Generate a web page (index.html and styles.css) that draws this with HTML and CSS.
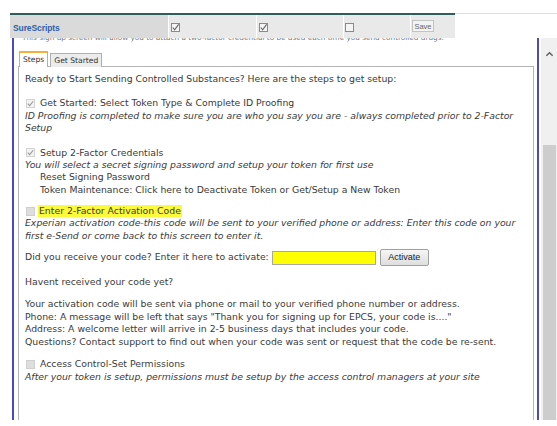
FILE: index.html
```html
<!DOCTYPE html>
<html>
<head>
<meta charset="utf-8">
<title>EPCS Setup</title>
<link rel="stylesheet" href="styles.css">
</head>
<body>
<div class="topbar">
  <div class="hdr">
    <div class="cell name">SureScripts</div>
    <div class="cell c2"><span class="hcb on"><svg viewBox="0 0 10 10"><polyline points="2,5 4,7.5 8.5,1.5"/></svg></span></div>
    <div class="cell c3"><span class="hcb on"><svg viewBox="0 0 10 10"><polyline points="2,5 4,7.5 8.5,1.5"/></svg></span></div>
    <div class="cell c4"><span class="hcb"></span></div>
    <div class="cell c5"><span class="save">Save</span></div>
  </div>
</div>
<div class="frame">
  <div class="panel">
    <div class="cut"><p>This sign up screen will allow you to attach a two-factor credential to be used each time you send controlled drugs.</p></div>
    <div class="tabs"><span class="tab active">Steps</span><span class="tab">Get Started</span></div>
    <div class="box">
      <p class="line first">Ready to Start Sending Controlled Substances? Here are the steps to get setup:</p>

      <div class="blk">
        <div class="line"><span class="cb on"><svg viewBox="0 0 10 10"><polyline points="2,5.2 4,7.3 8,2.5"/></svg></span>Get Started: Select Token Type &amp; Complete ID Proofing</div>
        <div class="line it">ID Proofing is completed to make sure you are who you say you are - always completed prior to 2-Factor<br>Setup</div>
      </div>

      <div class="blk">
        <div class="line"><span class="cb on"><svg viewBox="0 0 10 10"><polyline points="2,5.2 4,7.3 8,2.5"/></svg></span>Setup 2-Factor Credentials</div>
        <div class="line it">You will select a secret signing password and setup your token for first use</div>
        <div class="line ind">Reset Signing Password</div>
        <div class="line ind">Token Maintenance: Click here to Deactivate Token or Get/Setup a New Token</div>
      </div>

      <div class="blk b3">
        <div class="line"><span class="cb"></span><span class="hl">Enter 2-Factor Activation Code</span></div>
        <div class="line it">Experian activation code-this code will be sent to your verified phone or address: Enter this code on your<br>first e-Send or come back to this screen to enter it.</div>
      </div>

      <div class="row">Did you receive your code? Enter it here to activate: <span class="inp"></span><span class="btn">Activate</span></div>

      <div class="line havent">Havent received your code yet?</div>

      <div class="blk b5">
        <div class="line">Your activation code will be sent via phone or mail to your verified phone number or address.</div>
        <div class="line">Phone: A message will be left that says "Thank you for signing up for EPCS, your code is...."</div>
        <div class="line">Address: A welcome letter will arrive in 2-5 business days that includes your code.</div>
        <div class="line">Questions? Contact support to find out when your code was sent or request that the code be re-sent.</div>
      </div>

      <div class="blk b6">
        <div class="line"><span class="cb"></span>Access Control-Set Permissions</div>
        <div class="line it">After your token is setup, permissions must be setup by the access control managers at your site</div>
      </div>
    </div>
  </div>
  <div class="scroll">
    <div class="arrow"><svg viewBox="0 0 10 6"><polyline points="1.5,5 5,1.5 8.5,5"/></svg></div>
    <div class="thumb"></div>
  </div>
</div>
</body>
</html>
```

FILE: styles.css
```css
html, body {
  margin: 0;
  padding: 0;
  background: #ffffff;
  width: 557px;
  height: 426px;
  overflow: hidden;
}

body {
  font-family: "DejaVu Sans", Verdana, sans-serif;
  color: #3a3a3a;
}

/* ---------- top header row ---------- */
.topbar {
  margin-top: 13px;
  margin-left: 10px;
  border-top: 1px solid #dcdcdc;
}

.hdr {
  margin-top: -1px;
  width: 445px;
  display: flex;
  border-top: 2px solid #2f5d5b;
  height: 23px;
}

.cell {
  display: flex;
  align-items: center;
  background: #e9e9e9;
  box-sizing: border-box;
}

.cell.name {
  width: 158px;
  background: #dadada;
  padding-left: 3px;
  padding-top: 2px;
  font-family: "Liberation Sans", Arial, sans-serif;
  font-weight: bold;
  font-size: 8.5px;
  color: #2f5fa6;
  letter-spacing: -0.1px;
}

.cell.c2 { width: 88px; border-left: 1px solid #ffffff; padding-left: 2px; padding-top: 2px; }
.cell.c3 { width: 87px; border-left: 1px solid #ffffff; padding-left: 2px; padding-top: 2px; }
.cell.c4 { width: 67px; border-left: 1px solid #ffffff; padding-left: 1px; padding-top: 2px; }
.cell.c5 { width: 45px; border-left: 1px solid #ffffff; padding-left: 1px; padding-bottom: 1px; }

.hcb {
  display: inline-block;
  width: 9px;
  height: 9px;
  border: 1px solid #8a8a8a;
  background: #f4f4f4;
  box-sizing: border-box;
}

.hcb svg {
  display: block;
  width: 9px;
  height: 9px;
  margin: -1px;
}

.hcb svg polyline {
  fill: none;
  stroke: #6d6d6d;
  stroke-width: 1.3;
}

.save {
  display: inline-block;
  width: 22px;
  height: 12px;
  line-height: 11px;
  box-sizing: border-box;
  border: 1px solid #c3c3c3;
  background: #f3f3f3;
  font-family: "Liberation Sans", Arial, sans-serif;
  font-size: 7.5px;
  color: #666;
  text-align: center;
}

/* ---------- scrolling frame ---------- */
.frame {
  display: flex;
  margin-left: 12px;
  height: 382px;
}

.panel {
  width: 527px;
  box-sizing: border-box;
  border-left: 2px solid #4a4ac4;
  border-right: 2px solid #4a4ac4;
  padding: 0 3px 0 4px;
  overflow: hidden;
}

.cut {
  height: 5px;
  overflow: hidden;
  padding-left: 4px;
}

.cut p {
  margin: -5px 0 0 0;
  font-size: 7.3px;
  line-height: 10px;
  color: #777;
  white-space: nowrap;
}

.tabs {
  margin-top: 8px;
  margin-left: 1px;
  display: flex;
  align-items: flex-end;
  position: relative;
  z-index: 1;
  margin-bottom: -1px;
}

.tab {
  display: inline-block;
  height: 14px;
  box-sizing: border-box;
  border: 1px solid #b0b0b0;
  border-bottom: none;
  background: #ececec;
  padding: 0 3px;
  font-family: "DejaVu Sans", Verdana, sans-serif;
  font-size: 7.6px;
  line-height: 13px;
  color: #333;
  margin-right: 2px;
}

.tab.active {
  height: 16px;
  background: #ffffff;
  border-top: 2px solid #f0b23a;
  line-height: 14px;
}

.box {
  border: 1px solid #b4b4b4;
  padding: 6px 6px 0 6px;
  height: 400px;
  font-size: 9.3px;
  line-height: 12.4px;
  white-space: nowrap;
}

.line {
  margin: 0;
  display: flex;
  align-items: center;
}

.it {
  display: block;
  font-style: italic;
}

.ind { padding-left: 15px; }

.blk { margin-top: 12px; }
.blk.b3 { margin-top: 9px; }
.blk.b5 { margin-top: 10px; }
.blk.b6 { margin-top: 10px; }

.cb {
  display: inline-block;
  width: 9px;
  height: 9px;
  box-sizing: border-box;
  border: 1px solid #cfcfcf;
  background: #dedede;
  margin: 0 5px 0 1px;
  flex: none;
}

.cb.on {
  background: #f3f3f3;
  border-color: #d3d3d3;
}

.cb svg {
  display: block;
  width: 9px;
  height: 9px;
  margin: -1px;
}

.cb svg polyline {
  fill: none;
  stroke: #9a9a9a;
  stroke-width: 1.2;
}

.hl {
  background: #fbfb3c;
  padding: 0 1px;
  line-height: 12px;
  margin-left: -2px;
}

.row {
  margin-top: 7px;
  display: flex;
  align-items: center;
  height: 17px;
}

.inp {
  display: inline-block;
  width: 104px;
  height: 14px;
  box-sizing: border-box;
  border: 1px solid #a8a8a8;
  background: #ffff00;
  margin-left: 3px;
}

.btn {
  display: inline-block;
  width: 49px;
  height: 17px;
  box-sizing: border-box;
  border: 1px solid #a0a0a0;
  border-radius: 2px;
  background: linear-gradient(#f6f6f6, #dedede);
  margin-left: 4px;
  font-family: "Liberation Sans", Arial, sans-serif;
  font-size: 9px;
  line-height: 15px;
  text-align: center;
  color: #222;
}

.havent { margin-top: 10px; }

/* ---------- scrollbar ---------- */
.scroll {
  width: 16px;
  margin-left: 2px;
  background: #f0f0f0;
  display: flex;
  flex-direction: column;
}

.arrow {
  height: 107px;
  display: flex;
  justify-content: center;
  padding-top: 13px;
  box-sizing: border-box;
}

.arrow svg {
  width: 9px;
  height: 6px;
}

.arrow svg polyline {
  fill: none;
  stroke: #606060;
  stroke-width: 1.6;
}

.thumb {
  flex: 1;
  margin: 0 1px 0 2px;
  background: #cdcdcd;
}
```
